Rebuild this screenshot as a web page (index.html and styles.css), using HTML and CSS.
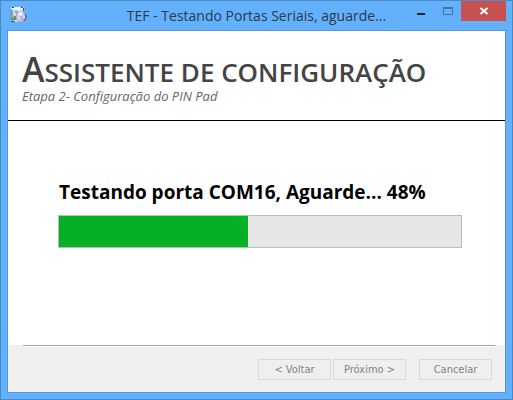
FILE: index.html
```html
<!DOCTYPE html>
<html lang="pt-BR">
<head>
  <meta charset="utf-8">
  <title>TEF - Testando Portas Seriais</title>
  <link rel="stylesheet" href="styles.css">
</head>
<body>
  <div class="window">
    <!-- Title bar -->
    <div class="titlebar">
      <svg class="app-icon" width="18" height="18" viewBox="0 0 18 18">
        <path d="M2 2 L4 1 L14 1 L15 2 L14 15 L13 16 L3 16 L1 14 L1 4 Z" fill="#c3dff7"/>
        <path d="M1 3 L4 4 L4 16 L1 14 Z" fill="#7d9fc4"/>
        <path d="M2 2 L4 1 L14 1 L15 2 L13 4 L4 4 Z" fill="#eef5fb"/>
        <path d="M3 1.5 H5 M12 1.5 H14 M14.5 2 V5" stroke="#3a4653" fill="none"/>
        <path d="M2 15.5 H6" stroke="#4a5a6c"/>
        <path d="M6 5 L10 8" stroke="#8f9ec4" stroke-width="2"/>
        <rect x="4" y="10" width="2" height="2" fill="#e8a53a"/>
        <rect x="5" y="10" width="2" height="4" fill="#2fa84a"/>
        <rect x="3" y="12" width="2" height="2" fill="#4b86d8"/>
        <circle cx="12" cy="11" r="5" fill="#d6d3ee" stroke="#9a9ac0"/>
        <path d="M12 11 L9 7 A5 5 0 0 1 13 6 Z" fill="#fff"/>
        <path d="M12 11 L16 13 A5 5 0 0 1 12 16 Z" fill="#b6b0e2"/>
        <circle cx="12" cy="11" r="1" fill="#fff" stroke="#a5a4cc"/>
        <path d="M16 8 L17 10 V12 L15 15" stroke="#4a4a60" fill="none"/>
      </svg>
      <div class="window-title">TEF - Testando Portas Seriais, aguarde...</div>
      <div class="window-buttons">
        <button class="window-button" aria-label="Minimizar">
          <svg width="12" height="12" viewBox="0 0 12 12"><rect x="2" y="8" width="8" height="2" fill="#222"/></svg>
        </button>
        <button class="window-button" aria-label="Maximizar" disabled>
          <svg width="12" height="12" viewBox="0 0 12 12" shape-rendering="crispEdges"><path d="M1 2 H11 V10 H1 Z M2 4 V9 H10 V4 Z" fill="#42749f" fill-rule="evenodd"/></svg>
        </button>
        <button class="window-button close-button" aria-label="Fechar">
          <svg width="12" height="12" viewBox="0 0 12 12"><path d="M2.5 3 L9.5 9 M9.5 3 L2.5 9" stroke="#fff" stroke-width="2"/></svg>
        </button>
      </div>
    </div>

    <div class="content">
      <!-- Header -->
      <div class="header">
        <h1 class="heading">Assistente de configuração</h1>
        <p class="step">Etapa 2- Configuração do PIN Pad</p>
      </div>

      <!-- Progress -->
      <div class="main">
        <label class="status" for="progress">Testando porta COM16, Aguarde... 48%</label>
        <progress class="progress" id="progress" value="47" max="100"></progress>
      </div>

      <!-- Navigation buttons -->
      <div class="footer">
        <hr class="divider">
        <div class="buttons">
          <button class="button" disabled>&lt; Voltar</button>
          <button class="button" disabled>Próximo &gt;</button>
          <button class="button cancel-button" disabled>Cancelar</button>
        </div>
      </div>
    </div>
  </div>
</body>
</html>
```

FILE: styles.css
```css
* {
  box-sizing: border-box;
}

body {
  margin: 0;
  font-family: "Open Sans", "Noto Sans", sans-serif;
}

.window {
  min-height: 100vh;
  display: flex;
  flex-direction: column;
  background: #63b1fd;
  border: 1px solid #4b89c2;
  padding: 0 6px 6px;
}

/* Title bar */
.titlebar {
  display: grid;
  grid-template-columns: 1fr auto 1fr;
  height: 29px;
}

.app-icon {
  margin: 5px 2px;
}

.window-title {
  font-size: 14px;
  line-height: 30px;
  color: #2b3a48;
  white-space: nowrap;
}

.window-buttons {
  display: flex;
  justify-content: flex-end;
  align-items: flex-start;
}

.window-button {
  width: 27px;
  height: 20px;
  padding: 0;
  border: none;
  background: none;
  display: flex;
  justify-content: center;
  align-items: center;
}

.close-button {
  width: 45px;
  background: #c75050;
}

.content {
  flex: 1;
  display: flex;
  flex-direction: column;
  background: #fff;
  border: 1px solid #5297db;
}

/* Header */
.header {
  height: 90px;
  padding: 22px 14px 0;
  border-bottom: 1px solid #000;
}

.heading {
  margin: 0;
  font-size: 26px;
  font-weight: 600;
  text-transform: uppercase;
  line-height: 32px;
  color: #444;
  white-space: nowrap;
}

.heading::first-letter {
  font-size: 34px;
  line-height: 32px;
}

.step {
  margin: 0;
  font-size: 13px;
  font-style: italic;
  line-height: 16px;
  color: #666;
}

/* Progress */
.main {
  flex: 1;
  padding: 56px 43px 0 50px;
}

.status {
  display: block;
  padding-left: 1px;
  font-size: 19px;
  font-weight: 700;
  line-height: 30px;
  color: #000;
  white-space: nowrap;
}

.progress {
  display: block;
  appearance: none;
  width: 100%;
  height: 33px;
  margin-top: 8px;
  border: 1px solid #bcbcbc;
  background: #e6e6e6;
}

.progress::-webkit-progress-bar {
  background: #e6e6e6;
}

.progress::-webkit-progress-value {
  background: #06b025;
}

/* Navigation buttons */
.footer {
  height: 47px;
  background: #f0f0f0;
}

.divider {
  margin: 0 10px 0 15px;
  border: none;
  border-top: 1px solid #a0a0a0;
  border-bottom: 1px solid #fff;
}

.buttons {
  display: flex;
  justify-content: flex-end;
  gap: 2px;
  padding: 12px 13px 0;
}

.button {
  width: 73px;
  height: 21px;
  padding: 0;
  border: 1px solid #d9d9d9;
  background: #efefef;
  font-family: "DejaVu Sans Condensed", "DejaVu Sans", sans-serif;
  font-size: 11px;
  color: #838383;
}

.cancel-button {
  margin-left: 11px;
}
```
